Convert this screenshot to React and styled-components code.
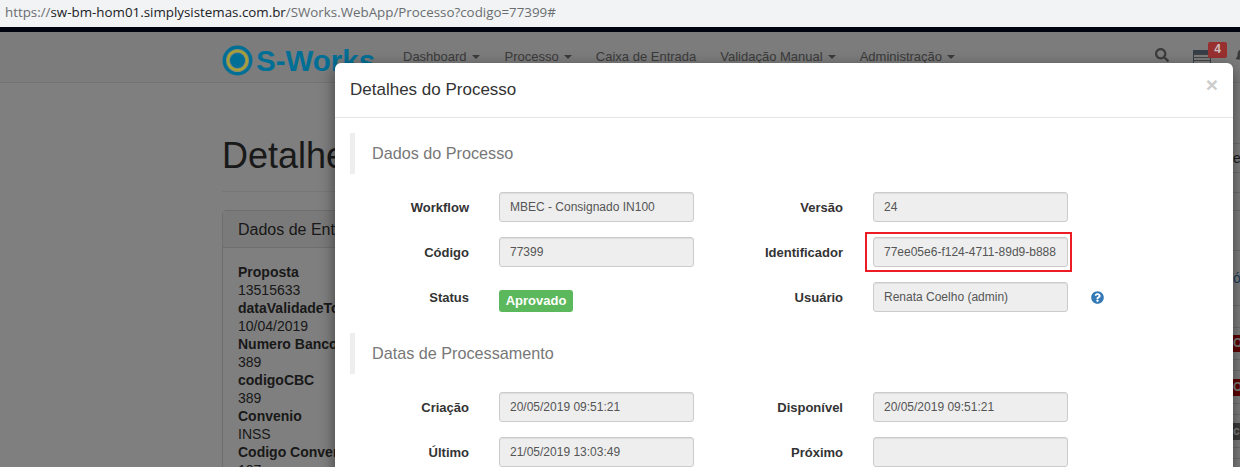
import React from 'react';
import styled, { createGlobalStyle } from 'styled-components';
import { FaSearch, FaQuestionCircle, FaBell } from 'react-icons/fa';

const GlobalStyle = createGlobalStyle`
    html, body {
        margin: 0;
        padding: 0;
        height: 467px;
        overflow: hidden;
        background: #fff;
        font-family: "Liberation Sans", Arial, sans-serif;
    }
`

const Screen = styled.div`
    width: 1240px;
    height: 467px;
    display: flex;
    flex-direction: column;
    overflow: hidden;
`

const AddressBar = styled.div`
    height: 27px;
    flex: none;
    background: #f1f3f4;
    padding-left: 5px;
    font-family: "Open Sans", sans-serif;
    font-size: 13.35px;
    line-height: 25px;
    color: #6a6d70;
    white-space: nowrap;
`

const Host = styled.span`
    color: #202124;
`

const Strip = styled.div`
    height: 5px;
    flex: none;
    background: #00040f;
`

const Page = styled.div`
    flex: 1;
    position: relative;
    overflow: hidden;
    background: #fff;
    color: #333;
    font-size: 14px;
`

const Navbar = styled.nav`
    height: 51px;
    box-sizing: border-box;
    border-bottom: 1px solid #e7e7e7;
    padding-left: 222px;
    display: flex;
    align-items: center;
    background: #f8f8f8;
    white-space: nowrap;
`

// the brand colours stay saturated under the backdrop in the reference
const Brand = styled.div`
    position: relative;
    z-index: 2;
    flex: none;
    display: flex;
    align-items: center;
    gap: 3px;
    width: 181px;
    margin-top: 7px;
    font-size: 29.5px;
    font-weight: 700;
    color: #006f96;
`

const NavItem = styled.span`
    flex: none;
    margin-right: ${props => props.gap}px;
    color: #777;
    font-size: 13px;
    display: inline-flex;
    align-items: center;
    margin-top: -2px;
`

const Caret = styled.i`
    margin-left: 5px;
    margin-top: 2px;
    border-top: 4px solid #777;
    border-left: 4px solid transparent;
    border-right: 4px solid transparent;
`

const NavTools = styled.div`
    flex: none;
    display: flex;
    align-items: center;
    margin-left: 200px;
    margin-top: -4px;
    color: #777;
`

const Tray = styled.div`
    position: relative;
    width: 18px;
    height: 16px;
    margin-left: 24px;
    margin-top: 6px;
    border: 1px solid #6d7f8f;
    border-top-width: 4px;
    box-sizing: border-box;
    background: repeating-linear-gradient(#888 0 1px, transparent 1px 3px);
`

const TrayBadge = styled.span`
    position: absolute;
    z-index: 2;
    left: 14px;
    top: -12px;
    width: 19px;
    height: 16px;
    border-radius: 2px;
    background: #983030;
    color: #cdbfbf;
    font-size: 12px;
    font-weight: 700;
    line-height: 15px;
    text-align: center;
`

const BellWrap = styled.div`
    margin-left: 24px;
    margin-top: 2px;
    font-size: 14px;
    color: #777;
`

const Content = styled.div`
    display: flex;
    padding-left: 222px;
`

const MainColumn = styled.div`
    width: 978px;
    flex: none;
`

const PageTitle = styled.h1`
    margin: 0;
    padding: 53px 0 15px;
    border-bottom: 1px solid #eee;
    font-size: 36px;
    font-weight: 400;
    line-height: 40px;
    white-space: nowrap;
`

const EntryPanel = styled.section`
    margin-top: 18px;
    border: 1px solid #ddd;
    border-radius: 4px 4px 0 0;
`

const EntryHeading = styled.h3`
    margin: 0;
    padding: 10px 15px;
    height: 37px;
    box-sizing: border-box;
    border-bottom: 1px solid #ddd;
    background: #f5f5f5;
    font-size: 16px;
    font-weight: 400;
    line-height: 17px;
`

const EntryBody = styled.div`
    padding: 15px;
    line-height: 18px;
`

const EntryLine = styled.div`
    font-weight: ${props => (props.$strong ? 700 : 400)};
`

const SideColumn = styled.div`
    flex: 1;
    margin-top: 60px;
    display: flex;
    flex-direction: column;
`

const SideRow = styled.div`
    height: ${props => props.$h}px;
    box-sizing: border-box;
    border-top: 1px solid #ddd;
    padding-left: 33px;
    display: flex;
    align-items: center;
    color: ${props => (props.$link ? '#337ab7' : '#333')};
    font-size: 14px;
`

const SideButton = styled.span`
    display: block;
    width: 40px;
    height: 17px;
    margin-left: -6px;
    padding-left: 6px;
    background: ${props => (props.$dark ? '#777' : '#c00000')};
    color: #fff;
    font-size: 12px;
    font-weight: 700;
    line-height: 17px;
`

const Backdrop = styled.div`
    position: absolute;
    inset: 0;
    background: rgba(0, 0, 0, 0.5);
`

const Modal = styled.div`
    position: absolute;
    z-index: 3;
    left: 335px;
    top: 31px;
    width: 898px;
    height: 520px;
    background: #fff;
    border-radius: 6px;
    box-shadow: 0 5px 15px rgba(0, 0, 0, 0.5);
`

const ModalHeader = styled.header`
    height: 55px;
    box-sizing: border-box;
    border-bottom: 1px solid #e5e5e5;
    padding: 0 15px;
    display: flex;
    align-items: center;
    justify-content: space-between;
`

const ModalTitle = styled.h4`
    margin: 0 0 1px;
    font-size: 17px;
    font-weight: 400;
    color: #333;
`

const CloseButton = styled.span`
    margin: -11px 0 0;
    font-size: 21px;
    font-weight: 700;
    line-height: 1;
    color: #ccc;
`

const ModalBody = styled.div`
    padding: 15px;
`

const SectionTitle = styled.div`
    height: 41px;
    box-sizing: border-box;
    border-left: 5px solid #eee;
    padding-left: 17px;
    margin-bottom: 18px;
    font-size: 16.2px;
    line-height: 41px;
    color: #777;
`

const Section = styled.section`
    margin-bottom: 21px;
`

const FieldGrid = styled.div`
    display: grid;
    grid-template-columns: 149px 195px 179px 195px 42px;
    row-gap: 15px;
    align-items: center;
`

const Label = styled.label`
    display: block;
    padding-right: 30px;
    font-size: 13px;
    font-weight: 700;
    text-align: right;
    color: #333;
`

const Control = styled.div`
    position: relative;
    height: 30px;
    box-sizing: border-box;
    border: 1px solid #ccc;
    border-radius: 3px;
    padding: 0 10px;
    background: #eee;
    box-shadow: inset 0 1px 1px rgba(0, 0, 0, 0.075);
    font-size: 12px;
    line-height: 28px;
    color: #555;
    white-space: nowrap;
`

const Highlight = styled.span`
    position: absolute;
    left: -9px;
    top: -6px;
    width: 207px;
    height: 40px;
    box-sizing: border-box;
    border: 2px solid #ed1c24;
`

const StatusCell = styled.div`
    height: 30px;
    display: flex;
    align-items: flex-end;
`

const StatusBadge = styled.span`
    width: 74px;
    height: 22px;
    border-radius: 3px;
    background: #5cb85c;
    color: #fff;
    font-size: 13px;
    font-weight: 700;
    line-height: 21px;
    text-align: center;
`

const HelpCell = styled.div`
    padding-left: 23px;
    display: flex;
    align-items: center;
    color: #337ab7;
    font-size: 13px;
`

const navItems = [
    { label: 'Dashboard', caret: true, gap: 25 },
    { label: 'Processo', caret: true, gap: 24 },
    { label: 'Caixa de Entrada', gap: 24 },
    { label: 'Validação Manual', caret: true, gap: 24 },
    { label: 'Administração', caret: true, gap: 0 },
];

const entryLines = [
    ['Proposta', true], ['13515633'], ['dataValidadeTokenAutorizacao', true], ['10/04/2019'],
    ['Numero Banco', true], ['389'], ['codigoCBC', true], ['389'],
    ['Convenio', true], ['INSS'], ['Codigo Convenio', true], ['107'],
];

const sideRows = [
    { h: 29, text: 'e' }, { h: 20 }, { h: 18 }, { h: 40 },
    { h: 55, text: 'ó', link: true }, { h: 22 },
    { h: 32, button: 'O' }, { h: 11 }, { h: 33, button: 'O' }, { h: 11 },
    { h: 33, button: 'cu', dark: true }, { h: 11 }, { h: 20 },
];

const Logo = () => (
    <svg width="31" height="31" viewBox="0 0 31 31">
        <circle cx="15.5" cy="15.5" r="15" fill="#006f96" />
        <circle cx="15.5" cy="15.5" r="11.5" fill="#8a8a70" />
        <circle cx="15.5" cy="15.5" r="10.5" fill="#a8a52e" />
        <circle cx="15.5" cy="15.5" r="8.5" fill="#808080" />
        <circle cx="15.5" cy="15.5" r="7.5" fill="#006f96" />
    </svg>
);

const App = () => {
    return (
        <Screen>
            <GlobalStyle />
            <AddressBar>
                https://<Host>sw-bm-hom01.simplysistemas.com.br</Host>/SWorks.WebApp/Processo?codigo=77399#
            </AddressBar>
            <Strip />
            <Page>
                <Navbar>
                    <Brand><Logo />S-Works</Brand>
                    {navItems.map(item => (
                        <NavItem key={item.label} gap={item.gap}>
                            {item.label}
                            {item.caret && <Caret />}
                        </NavItem>
                    ))}
                    <NavTools>
                        <FaSearch size={14} />
                        <Tray><TrayBadge>4</TrayBadge></Tray>
                        <BellWrap><FaBell /></BellWrap>
                    </NavTools>
                </Navbar>
                <Content>
                    <MainColumn>
                        <PageTitle>Detalhes do Processo</PageTitle>
                        <EntryPanel>
                            <EntryHeading>Dados de Entrada</EntryHeading>
                            <EntryBody>
                                {entryLines.map(([text, strong], i) => (
                                    <EntryLine key={i} $strong={strong}>{text}</EntryLine>
                                ))}
                            </EntryBody>
                        </EntryPanel>
                    </MainColumn>
                    <SideColumn>
                        {sideRows.map((row, i) => (
                            <SideRow key={i} $h={row.h} $link={row.link}>
                                {row.button ? <SideButton $dark={row.dark}>{row.button}</SideButton> : row.text}
                            </SideRow>
                        ))}
                    </SideColumn>
                </Content>
                <Backdrop />
                <Modal>
                    <ModalHeader>
                        <ModalTitle>Detalhes do Processo</ModalTitle>
                        <CloseButton>×</CloseButton>
                    </ModalHeader>
                    <ModalBody>
                        <Section>
                            <SectionTitle>Dados do Processo</SectionTitle>
                            <FieldGrid>
                                <Label>Workflow</Label>
                                <Control>MBEC - Consignado IN100</Control>
                                <Label>Versão</Label>
                                <Control>24</Control>
                                <div />
                                <Label>Código</Label>
                                <Control>77399</Control>
                                <Label>Identificador</Label>
                                <Control>77ee05e6-f124-4711-89d9-b888<Highlight /></Control>
                                <div />
                                <Label>Status</Label>
                                <StatusCell><StatusBadge>Aprovado</StatusBadge></StatusCell>
                                <Label>Usuário</Label>
                                <Control>Renata Coelho (admin)</Control>
                                <HelpCell><FaQuestionCircle /></HelpCell>
                            </FieldGrid>
                        </Section>
                        <Section>
                            <SectionTitle>Datas de Processamento</SectionTitle>
                            <FieldGrid>
                                <Label>Criação</Label>
                                <Control>20/05/2019 09:51:21</Control>
                                <Label>Disponível</Label>
                                <Control>20/05/2019 09:51:21</Control>
                                <div />
                                <Label>Último</Label>
                                <Control>21/05/2019 13:03:49</Control>
                                <Label>Próximo</Label>
                                <Control />
                                <div />
                            </FieldGrid>
                        </Section>
                    </ModalBody>
                </Modal>
            </Page>
        </Screen>
    );
};

export default App;
